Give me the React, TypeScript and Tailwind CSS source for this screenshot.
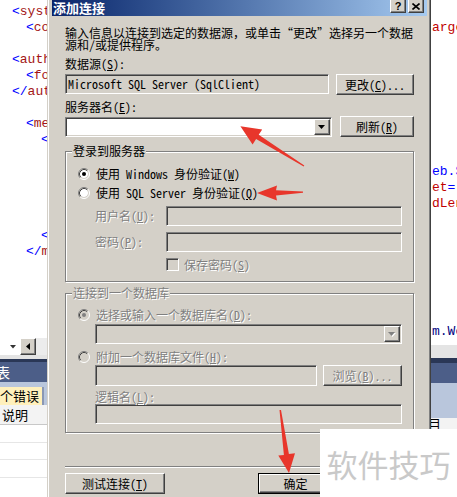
import React from "react";

const cjk = "[font-family:'Noto_Sans_Mono_CJK_SC','Noto_Sans_CJK_SC',sans-serif]";
const mono = "[font-family:'Liberation_Mono',monospace]";
const sunken =
  "border border-t-[#808080] border-l-[#808080] border-b-white border-r-white shadow-[inset_1px_1px_0_#404040,inset_-1px_-1px_0_#d4d0c8]";
const raised =
  "border border-t-white border-l-white border-b-[#404040] border-r-[#404040] shadow-[inset_-1px_-1px_0_#808080] bg-[#d4d0c8]";
const dis = "text-[#808080] [text-shadow:1px_1px_0_#fff]";

function K({ c }: { c: string }) {
  return <span className="underline underline-offset-1">{c}</span>;
}

function Radio({ checked, disabled }: { checked?: boolean; disabled?: boolean }) {
  return (
    <svg width="12" height="12" viewBox="0 0 12 12" className="shrink-0">
      <circle cx="6" cy="6" r="4" fill={disabled ? "#d4d0c8" : "#fff"} />
      <path d="M2.82 9.18 A4.5 4.5 0 0 1 9.18 2.82" fill="none" stroke="#404040" />
      <path d="M9.18 2.82 A4.5 4.5 0 0 1 2.82 9.18" fill="none" stroke="#d4d0c8" />
      <path d="M2.11 9.89 A5.5 5.5 0 0 1 9.89 2.11" fill="none" stroke="#808080" />
      <path d="M9.89 2.11 A5.5 5.5 0 0 1 2.11 9.89" fill="none" stroke="#fff" />
      {checked && <circle cx="6" cy="6" r="2" fill={disabled ? "#808080" : "#000"} />}
    </svg>
  );
}

function Arrow({ disabled }: { disabled?: boolean }) {
  return (
    <div className={`${raised} w-[16px] h-[16px] shrink-0 flex items-center justify-center`}>
      <svg width="8" height="5" viewBox="0 0 8 5">
        {disabled && <polygon points="1,1 8,1 4.5,5" fill="#fff" />}
        <polygon points="0,0 7,0 3.5,4" fill={disabled ? "#808080" : "#000"} />
      </svg>
    </div>
  );
}

function LeftEditor() {
  const lt = "text-[#0000ff]";
  const tg = "text-[#a31515]";
  return (
    <div className="w-[47px] shrink-0 flex flex-col h-full overflow-hidden">
      <div className={`h-[338px] bg-white pt-[4px] ${mono} text-[13px] leading-[16px] whitespace-pre overflow-hidden`}>
        <div className="h-[16px] pl-[12px]"><span className={lt}>&lt;</span><span className={tg}>system.web</span></div>
        <div className="h-[16px] pl-[26px]"><span className={lt}>&lt;</span><span className={tg}>compilation</span></div>
        <div className="h-[16px]" />
        <div className="h-[16px] pl-[12px]"><span className={lt}>&lt;</span><span className={tg}>authentication</span></div>
        <div className="h-[16px] pl-[26px]"><span className={lt}>&lt;</span><span className={tg}>forms</span></div>
        <div className="h-[16px] pl-[12px]"><span className={lt}>&lt;/</span><span className={tg}>authentication</span></div>
        <div className="h-[16px]" />
        <div className="h-[16px] pl-[26px]"><span className={lt}>&lt;</span><span className={tg}>membership</span></div>
        <div className="h-[16px] pl-[41px]"><span className={lt}>&lt;</span><span className={tg}>providers</span></div>
        <div className="h-[80px]" />
        <div className="h-[16px] pl-[41px]"><span className={lt}>&lt;/</span><span className={tg}>providers</span></div>
        <div className="h-[16px] pl-[26px]"><span className={lt}>&lt;/</span><span className={tg}>membership</span></div>
      </div>
      <div className="h-[17px] flex bg-[#ececec]">
        <div className="w-[20px] bg-white flex items-center justify-end pr-[4px]">
          <svg width="6" height="4" viewBox="0 0 6 4"><polygon points="0,0 6,0 3,3.5" fill="#333" /></svg>
        </div>
        <div className={`${raised} w-[16px] flex items-center justify-center`}>
          <svg width="4" height="7" viewBox="0 0 4 7"><polygon points="4,0 4,7 0,3.5" fill="#000" /></svg>
        </div>
      </div>
      <div className="h-[4px] bg-[#e4e4e4]" />
      <div className="h-[3px] bg-[#2a3756]" />
      <div className={`h-[20px] bg-[#4c5e88] text-white text-[14px] leading-[20px] ${cjk} -ml-[4px]`}>表</div>
      <div className="h-[23px] bg-[#b9c6dc] pt-[5px] flex">
        <div className={`w-[44px] h-[18px] bg-[#fff0bc] border-r-2 border-r-[#8a97b4] ${cjk} text-[13px] leading-[18px] whitespace-nowrap overflow-hidden`}>个错误</div>
      </div>
      <div className={`h-[20px] bg-[#f3f3f3] border-b border-b-[#c8c8c8] ${cjk} text-[13px] leading-[19px] pl-[2px]`}>说明</div>
      <div className="flex-1 bg-white flex flex-col">
        <div className="h-[18px] border-b border-b-[#e6e6e6]" />
        <div className="h-[17px] border-b border-b-[#e6e6e6]" />
        <div className="h-[18px] border-b border-b-[#e6e6e6]" />
      </div>
    </div>
  );
}

function RightEditor() {
  const red = "text-[#c00000]";
  const blue = "text-[#0000ff]";
  return (
    <div className="w-[26px] shrink-0 flex flex-col h-full overflow-hidden">
      <div className={`h-[345px] bg-white pt-[4px] pl-[1px] ${mono} text-[13px] leading-[16px] whitespace-pre overflow-hidden`}>
        <div className="h-[16px]" />
        <div className={`h-[16px] ${red}`}>arget</div>
        <div className="h-[128px]" />
        <div className={`h-[16px] ${blue}`}>eb.S</div>
        <div className="h-[16px]"><span className={red}>et</span><span className={blue}>="</span></div>
        <div className={`h-[16px] ${red}`}>dLength</div>
        <div className="h-[112px]" />
        <div className={`h-[16px] text-[#000080]`}>m.Web</div>
      </div>
      <div className="h-[13px] bg-[#e4e4e4]" />
      <div className="h-[5px] bg-[#2a3756]" />
      <div className="h-[20px] bg-[#4c5e88]" />
      <div className="h-[35px] bg-[#b9c6dc]" />
      <div className={`h-[12px] bg-[#f3f3f3] ${cjk} text-[13px] leading-[12px] -ml-[3px]`}>目</div>
      <div className="flex-1 bg-white" />
    </div>
  );
}

function Dialog() {
  return (
    <div className="w-[384px] shrink-0 h-full bg-[#d4d0c8] border-l border-l-[#d4d0c8] border-r border-r-[#404040] shadow-[inset_1px_0_0_#fff,inset_-1px_0_0_#808080] pl-[4px] pr-[3px] flex flex-col">
      <div className="h-[16px] shrink-0 bg-gradient-to-r from-[#0a246a] to-[#a6caf0] flex items-start pl-[1px] pr-[3px]">
        <span className={`text-white font-bold text-[13px] leading-[16px] ${cjk}`}>添加连接</span>
        <div className="ml-auto flex gap-[2px] -mt-[1px]">
          <div className={`${raised} w-[16px] h-[14px] flex items-center justify-center text-[11px] font-bold leading-[11px] [font-family:'Liberation_Sans',sans-serif]`}>?</div>
          <div className={`${raised} w-[16px] h-[14px] flex items-center justify-center`}>
            <svg width="8" height="7" viewBox="0 0 8 7">
              <path d="M0.5 0.5 L7.5 6.5 M7.5 0.5 L0.5 6.5" stroke="#000" strokeWidth="1.6" />
            </svg>
          </div>
        </div>
      </div>

      <div className="px-[13px] pt-[11px] flex flex-col">
        <p className="leading-[12px] whitespace-nowrap">
          输入信息以连接到选定的数据源，或单击“更改”选择另一个数据
          <br />
          源和/或提供程序。
        </p>
        <div className="mt-[7px] h-[12px]">数据源(<K c="S" />):</div>
        <div className="mt-[4px] flex items-start h-[21px]">
          <div className={`${sunken} w-[264px] h-[20px] bg-[#d4d0c8] pl-[2px] leading-[18px] whitespace-nowrap`}>
            Microsoft SQL Server (SqlClient)
          </div>
          <div className={`${raised} ml-auto w-[78px] h-[21px] flex items-center justify-center`}>
            更改(<K c="C" />)...
          </div>
        </div>
        <div className="mt-[6px] h-[12px]">服务器名(<K c="E" />):</div>
        <div className="mt-[3px] flex items-start h-[21px]">
          <div className={`${sunken} mt-[1px] w-[267px] h-[20px] bg-white flex items-center justify-end p-[1px]`}>
            <Arrow />
          </div>
          <div className={`${raised} ml-auto w-[74px] h-[21px] flex items-center justify-center`}>
            刷新(<K c="R" />)
          </div>
        </div>

        <fieldset className="mt-[8px] border border-[#808080] shadow-[1px_1px_0_#fff,inset_1px_1px_0_#fff] pl-[12px] pr-[11px] pt-[10px] pb-[10px] min-w-0">
          <legend className="ml-[-6px] px-[1px] leading-[12px] bg-[#d4d0c8]">登录到服务器</legend>
          <div className="h-[14px] flex items-center gap-[6px]">
            <Radio checked />
            <span>使用 Windows 身份验证(<K c="W" />)</span>
          </div>
          <div className="mt-[5px] h-[14px] flex items-center gap-[6px]">
            <Radio />
            <span>使用 SQL Server 身份验证(<K c="Q" />)</span>
          </div>
          <div className="mt-[6px] h-[20px] flex items-center">
            <span className={`ml-[17px] w-[71px] ${dis}`}>用户名(<K c="U" />):</span>
            <div className={`${sunken} flex-1 h-[20px] bg-[#d4d0c8]`} />
          </div>
          <div className="mt-[6px] h-[20px] flex items-center">
            <span className={`ml-[17px] w-[71px] ${dis}`}>密码(<K c="P" />):</span>
            <div className={`${sunken} flex-1 h-[20px] bg-[#d4d0c8]`} />
          </div>
          <div className="mt-[6px] h-[13px] flex items-center gap-[5px] ml-[88px]">
            <div className={`${sunken} w-[13px] h-[13px] bg-[#d4d0c8]`} />
            <span className={dis}>保存密码(<K c="S" />)</span>
          </div>
        </fieldset>

        <fieldset className="mt-[5px] border border-[#808080] shadow-[1px_1px_0_#fff,inset_1px_1px_0_#fff] pl-[12px] pr-[11px] pt-[9px] pb-[8px] min-w-0">
          <legend className={`ml-[-6px] px-[1px] leading-[12px] bg-[#d4d0c8] ${dis}`}>连接到一个数据库</legend>
          <div className="h-[14px] flex items-center gap-[6px]">
            <Radio checked disabled />
            <span className={dis}>选择或输入一个数据库名(<K c="D" />):</span>
          </div>
          <div className={`${sunken} mt-[2px] ml-[17px] h-[20px] bg-[#d4d0c8] flex items-center justify-end p-[1px]`}>
            <Arrow disabled />
          </div>
          <div className="mt-[6px] h-[14px] flex items-center gap-[6px]">
            <Radio disabled />
            <span className={dis}>附加一个数据库文件(<K c="H" />):</span>
          </div>
          <div className="mt-[1px] ml-[17px] h-[21px] flex items-start">
            <div className={`${sunken} w-[222px] h-[21px] bg-[#d4d0c8]`} />
            <div className={`${raised} ml-auto w-[79px] h-[21px] flex items-center justify-center ${dis}`}>
              浏览(<K c="B" />)...
            </div>
          </div>
          <div className={`mt-[5px] ml-[17px] h-[12px] ${dis}`}>逻辑名(<K c="L" />):</div>
          <div className={`${sunken} mt-[1px] ml-[17px] h-[20px] bg-[#d4d0c8]`} />
        </fieldset>

        <div className="mt-[33px] h-[2px] border-t border-t-[#808080] border-b border-b-white" />
        <div className="mt-[5px] flex h-[21px]">
          <div className={`${raised} w-[100px] h-[21px] flex items-center justify-center`}>
            测试连接(<K c="T" />)
          </div>
          <div className="ml-auto flex gap-[6px]">
            <div className="w-[75px] h-[21px] border border-black">
              <div className={`${raised} h-full flex items-center justify-center`}>确定</div>
            </div>
            <div className={`${raised} w-[75px] h-[21px] flex items-center justify-center`}>取消</div>
          </div>
        </div>
      </div>
    </div>
  );
}

function Arrows() {
  return (
    <svg className="absolute inset-0 pointer-events-none" width="457" height="497" viewBox="0 0 457 497">
      <polygon
        points="304.3,165.6 258.7,134.8 262.2,129.4 240.4,126.2 252.6,144.6 256.1,139 303.7,166.4"
        fill="#e8362b"
      />
      <polygon points="303,191.4 276,190.2 277,185.5 257,193 277,200.5 276,195.6 303,192.8" fill="#e8362b" />
      <polygon
        points="279.5,410 283.9,454.9 278.3,455.6 289,473 295,453.3 288.9,454.1 281,409.9"
        fill="#e8362b"
      />
    </svg>
  );
}

export default function App() {
  return (
    <div className={`relative w-[457px] h-[497px] overflow-hidden flex bg-white text-[12px] leading-[12px] text-black ${cjk}`}>
      <LeftEditor />
      <Dialog />
      <RightEditor />
      <Arrows />
      <div className="absolute left-[320px] top-[429px] w-[137px] h-[68px] bg-white flex items-center justify-center text-[31px] leading-[31px] text-[#c9c9c9] [font-family:'Noto_Sans_CJK_SC',sans-serif]">
        软件技巧
      </div>
    </div>
  );
}
